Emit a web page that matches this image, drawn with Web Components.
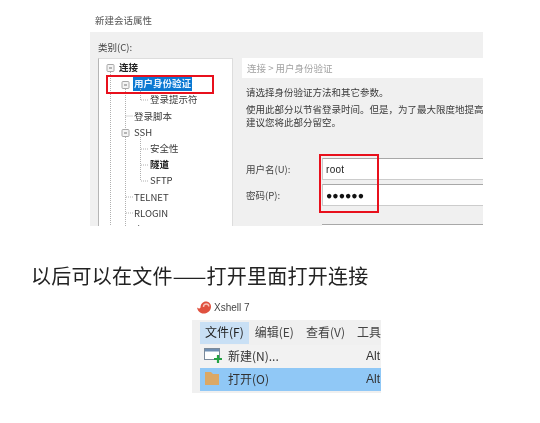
<!DOCTYPE html>
<html><head><meta charset="utf-8"><style>
html,body{margin:0;background:#fff}
body{width:540px;height:423px;overflow:hidden;font-family:"Liberation Sans","Noto Sans CJK SC",sans-serif}
</style></head><body>
<doc-page></doc-page>
<script>
const CJK='"Noto Sans CJK SC","Liberation Sans",sans-serif';
class TreeRow extends HTMLElement{
  constructor(){super();const l=+this.getAttribute('level')||0;
    this.attachShadow({mode:'open'}).innerHTML=`<style>
    :host{display:flex;align-items:center;height:16.2px;padding-left:${[20,35,51][l]}px;font:9.5px ${CJK};color:#3a3a3a;white-space:nowrap}
    :host([bold]) span{font-weight:700;color:#222}
    :host([sel]) span{background:#0a78d2;color:#e8f3ff;font-weight:700;padding:1px 1px;margin-left:-1px}
    </style><span><slot></slot></span>`;}
}
class CatTree extends HTMLElement{
  constructor(){super();this.attachShadow({mode:'open'}).innerHTML=`<style>
    :host{display:block;position:relative;width:135px;height:168px;background:#fff;border-left:1px solid #b5b5b5;border-top:1px solid #ddd;border-right:1px solid #ddd;box-sizing:border-box;overflow:hidden}
    svg{position:absolute;left:0;top:0}
    </style>
    <svg width="135" height="168" fill="none" stroke="#b0b0b0" stroke-width="1">
      <g stroke-dasharray="1 1">
        <path d="M11.500 13V170M26.500 30V170M41.500 30V41M41.500 76V122"/>
        <path d="M26.500 57H34M42 41H50M42 90H50M42 106H50M42 122H50M27 138H34M27 154H34"/>
      </g>
      <g fill="#f4f4f4" stroke="#a8a8a8">
        <rect x="8" y="5.500" width="7" height="7" rx="1"/><rect x="23" y="22.500" width="7" height="7" rx="1"/><rect x="23" y="70.500" width="7" height="7" rx="1"/>
      </g>
      <path d="M10 9h3M25 26h3M25 74h3" stroke="#777"/>
    </svg>
    <div><slot></slot></div>`;}
}
class FieldRow extends HTMLElement{
  constructor(){super();this.attachShadow({mode:'open'}).innerHTML=`<style>
    :host{display:grid;grid-template-columns:76px 1fr;align-items:center;height:var(--h,22px);font:9.5px ${CJK};color:#444}
    .box{height:100%;background:#fff;border-top:1px solid #a8a8a8;border-left:1px solid #c8c8c8;border-bottom:1px solid #ccc;box-sizing:border-box;display:flex;align-items:center;padding-left:3px;font:10px "Liberation Sans",sans-serif;color:#222;letter-spacing:.3px}
    </style><span><slot name="label"></slot></span><div class="box"><slot></slot></div>`;}
}
class SessionDialog extends HTMLElement{
  constructor(){super();this.attachShadow({mode:'open'}).innerHTML=`<style>
    :host{display:block;width:393px;margin-left:90px;font:9.5px ${CJK};color:#444;position:relative}
    .title{height:32px;padding:14px 0 0 5px;box-sizing:border-box;line-height:12px;color:#555}
    .panel{background:#f0f0f0;height:194px;padding:9px 0 0 8px;box-sizing:border-box;overflow:hidden}
    .cat{line-height:12px;height:17px;color:#444}
    .cols{display:flex;gap:9px}
    .right{flex:1;min-width:0}
    .crumb{height:20px;background:#fff;color:#a2a2a2;line-height:20px;padding-left:5px}
    .desc{padding:8px 0 0 4px;line-height:13px;color:#3a3a3a;white-space:nowrap;overflow:hidden;height:72px}
    .desc p{margin:0}.desc p.two{margin-top:4px}
    .fields{padding-left:4px;display:flex;flex-direction:column;gap:4px}
    .third{height:3px;margin:18px 0 0 80px;background:#fff;border-top:1px solid #a8a8a8}
    .red{position:absolute;border:2px solid #e8101c;box-sizing:border-box;pointer-events:none}
    .pw{letter-spacing:0;font-size:10.500px;font-weight:700;color:#111}
    </style>
    <div class="title">新建会话属性</div>
    <div class="panel">
      <div class="cat">类别(C):</div>
      <div class="cols">
        <cat-tree>
          <tree-row bold>连接</tree-row>
          <tree-row level="1" sel>用户身份验证</tree-row>
          <tree-row level="2">登录提示符</tree-row>
          <tree-row level="1">登录脚本</tree-row>
          <tree-row level="1">SSH</tree-row>
          <tree-row level="2">安全性</tree-row>
          <tree-row level="2" bold>隧道</tree-row>
          <tree-row level="2">SFTP</tree-row>
          <tree-row level="1">TELNET</tree-row>
          <tree-row level="1">RLOGIN</tree-row>
          <tree-row level="1">串口</tree-row>
        </cat-tree>
        <div class="right">
          <div class="crumb">连接 &gt; 用户身份验证</div>
          <div class="desc"><p>请选择身份验证方法和其它参数。</p><p class="two">使用此部分以节省登录时间。但是，为了最大限度地提高</p><p>建议您将此部分留空。</p></div>
          <div class="fields">
            <field-row><span slot="label">用户名(U):</span>root</field-row>
            <field-row><span slot="label">密码(P):</span><span class="pw">●●●●●●</span></field-row>
          </div>
          <div class="third"></div>
        </div>
      </div>
    </div>
    <div class="red" style="left:16px;top:75px;width:108px;height:19px"></div>
    <div class="red" style="left:229px;top:154px;width:60px;height:59px"></div>`;}
}
class MenuRow extends HTMLElement{
  constructor(){super();this.attachShadow({mode:'open'}).innerHTML=`<style>
    :host{display:flex;align-items:center;height:23px;box-sizing:border-box;padding-bottom:2px;background:#f2f2f2;font:12px ${CJK};color:#333;white-space:nowrap;overflow:hidden}
    :host([active]){background:#90c8f6}
    .ic{width:28px;padding-left:4px;box-sizing:border-box;display:flex;flex:none}
    .t{width:138px;flex:none}
    .k{font-family:"Liberation Sans",sans-serif}
    </style><span class="ic"><slot name="icon"></slot></span><span class="t"><slot></slot></span><span class="k">Alt</span>`;}
}
class AppMenu extends HTMLElement{
  constructor(){super();this.attachShadow({mode:'open'}).innerHTML=`<style>
    :host{display:block;width:189px;margin-left:192px;font:12px ${CJK};color:#333}
    .tb{display:flex;align-items:center;gap:3px;height:24px;padding-left:5px;font:10px "Liberation Sans",sans-serif;color:#444}
    .tb svg{flex:none}
    .menu{margin-top:1px;background:#f0f0f0;height:73px;overflow:hidden}
    .bar{display:flex;height:24px;padding-left:8px;align-items:flex-end;white-space:nowrap;margin-bottom:1px}
    .bar span{height:22px;line-height:20px;padding:0 6px;color:#444}
    .bar .on{background:#c9e0f5;color:#222;width:40px;padding:0 5px}
    .list{margin-left:8px}
    </style>
    <div class="tb"><svg width="14" height="13" viewBox="0 0 14 13"><path d="M0 6.500C2 8 3 7.500 3.500 6.500 3.500 3 6 .5 9 .5c2.800 0 5 2.200 5 5.200 0 3.500-3 6.800-7.500 6.800C3 12.500.8 10 0 6.500z" fill="#e0513f"/><path d="M6.500 6c0-1.800 1.200-3 2.800-3 1.500 0 2.500 1 2.500 2.500" fill="none" stroke="#f6c3b8" stroke-width="1.400"/></svg><span>Xshell 7</span></div>
    <div class="menu">
      <div class="bar"><span class="on">文件(F)</span><span>编辑(E)</span><span>查看(V)</span><span>工具</span></div>
      <div class="list">
        <menu-row><svg slot="icon" width="19" height="17" viewBox="0 0 19 17"><rect x=".5" y="1.500" width="15" height="11" fill="#fff" stroke="#7b8a9a"/><rect x="1" y="2" width="14" height="2.500" fill="#6f8fb3"/><path d="M14 8v8M10 12h8" stroke="#25a244" stroke-width="2.200"/></svg>新建(N)...</menu-row>
        <menu-row active><svg slot="icon" width="19" height="17" viewBox="0 0 19 17"><path d="M1 2h6l2 2h6v11H1z" fill="#dba865"/></svg>打开(O)</menu-row>
      </div>
    </div>`;}
}
class DocPage extends HTMLElement{
  constructor(){super();this.attachShadow({mode:'open'}).innerHTML=`<style>
    :host{display:block;height:423px;filter:blur(.4px)}
    .line{margin:38px 0 0 31px;font:20px/24px ${CJK};letter-spacing:.25px;color:#222;height:24px;white-space:nowrap}
    app-menu{margin-top:7px}
    </style>
    <session-dialog></session-dialog>
    <div class="line">以后可以在文件——打开里面打开连接</div>
    <app-menu></app-menu>`;}
}
customElements.define('tree-row',TreeRow);
customElements.define('cat-tree',CatTree);
customElements.define('field-row',FieldRow);
customElements.define('session-dialog',SessionDialog);
customElements.define('menu-row',MenuRow);
customElements.define('app-menu',AppMenu);
customElements.define('doc-page',DocPage);
</script>
</body></html>
